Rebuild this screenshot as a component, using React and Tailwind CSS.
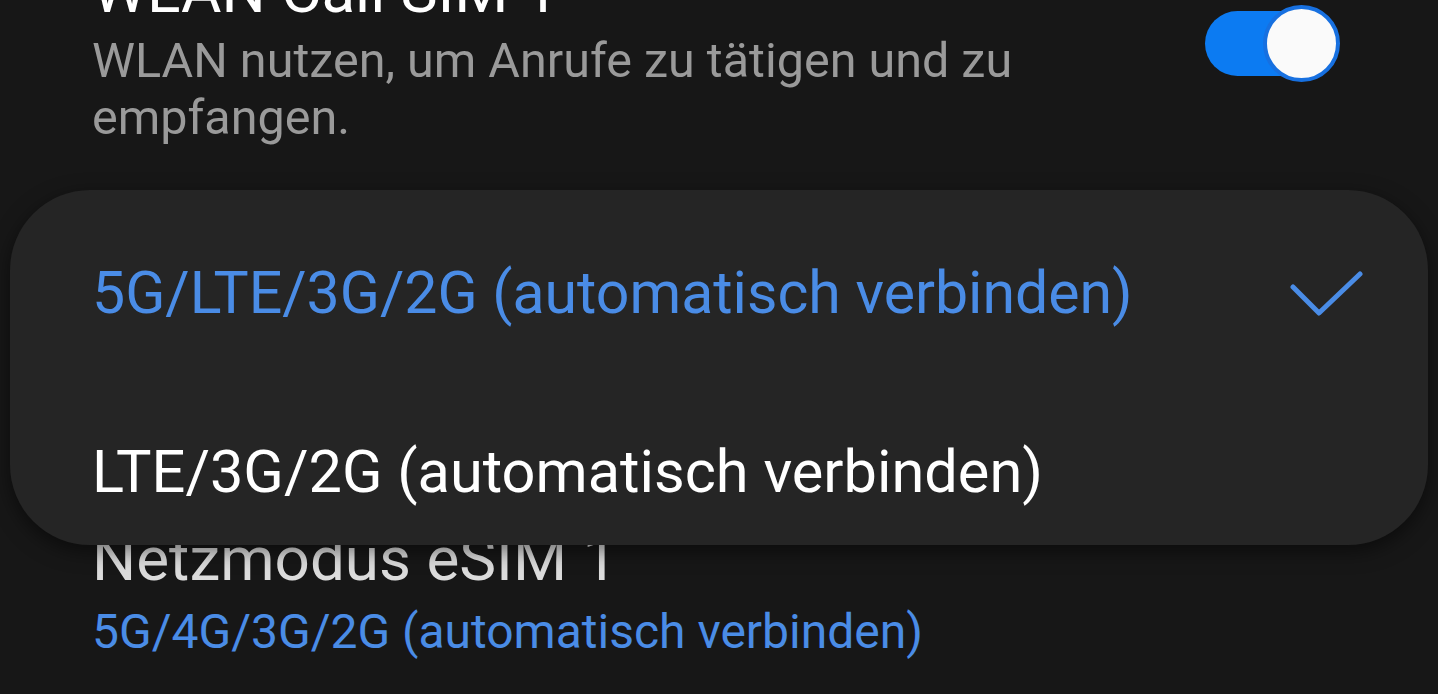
import React from "react";

export default function App() {
  return (
    <div
      className="relative w-[1438px] h-[694px] overflow-hidden bg-[#171717]"
      style={{ fontFamily: "Roboto, 'Noto Sans', sans-serif" }}
    >
      {/* WLAN Call row */}
      <div className="flex items-start justify-between mt-[-44px]">
        <div className="pl-[92px]">
          <div className="text-[62px] leading-[70px] text-white">WLAN Call SIM 1</div>
          <div className="mt-[6px] text-[48.5px] leading-[57px] text-[#9a9a9a] w-[960px]">
            WLAN nutzen, um Anrufe zu tätigen und zu empfangen.
          </div>
        </div>
        <div className="mt-[49px] mr-[98px] relative w-[135px] h-[77px] flex items-center">
          <div className="w-[125px] h-[65px] rounded-full bg-[#0c7bf2]" />
          <div className="absolute right-0 top-0 w-[77px] h-[77px] rounded-full bg-[#fafafa] border-[4px] border-[#1770e0]" />
        </div>
      </div>

      {/* Netzmodus row (under popup) */}
      <div className="absolute left-[92px] top-[524px]">
        <div className="text-[62px] leading-[70px] text-[#dcdcdc]">Netzmodus eSIM 1</div>
        <div className="mt-[9px] text-[48px] leading-[57px] text-[#4a8ce6]">5G/4G/3G/2G (automatisch verbinden)</div>
      </div>

      {/* Popup */}
      <div className="absolute left-[10px] top-[190px] w-[1418px] h-[355px] rounded-[80px] bg-[#252525] shadow-[0_6px_20px_rgba(0,0,0,0.5)] flex flex-col pt-[63px] pl-[82px] pr-[64px]">
        <div className="flex items-center justify-between h-[80px]">
          <span className="text-[59px] leading-[80px] text-[#4a8ce6]">5G/LTE/3G/2G (automatisch verbinden)</span>
          <svg width="74" height="46" viewBox="0 0 74 46" fill="none" className="mt-[2px]">
            <path d="M3 16 L29 42 L70 3" stroke="#4a8ce6" strokeWidth="5" strokeLinecap="round" strokeLinejoin="round" />
          </svg>
        </div>
        <div className="flex items-center h-[80px] mt-[99px]">
          <span className="text-[59.5px] leading-[80px] text-white">LTE/3G/2G (automatisch verbinden)</span>
        </div>
      </div>
    </div>
  );
}
